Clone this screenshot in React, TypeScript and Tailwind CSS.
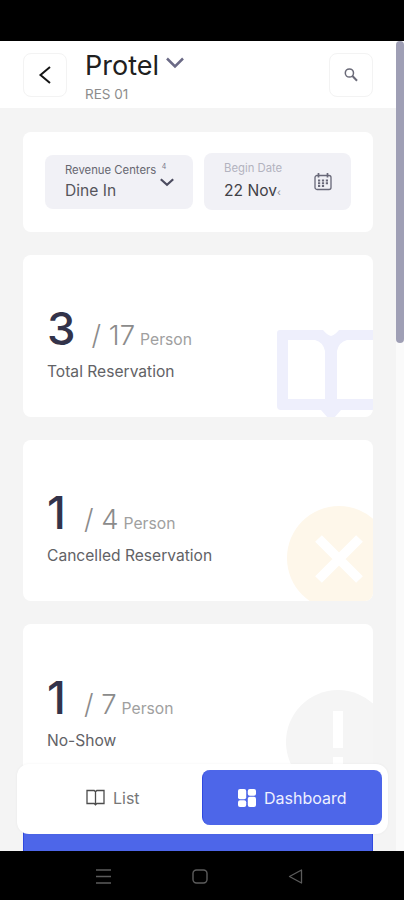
import type { ReactNode } from 'react';

const stats = [
  { id: 1, count: 3, people: '17', label: 'Total Reservation', gap: 'ml-[16px]', icon: <BookArt /> },
  { id: 2, count: 1, people: '4', label: 'Cancelled Reservation', gap: 'ml-[18px]', icon: <CancelArt /> },
  { id: 3, count: 1, people: '7', label: 'No-Show', gap: 'ml-[18px]', icon: <AlertArt /> },
];

function BookArt() {
  return (
    <svg className="absolute left-[254px] top-[75px]" width="108" height="90" viewBox="0 0 108 90" fill="none">
      <path
        d="M0 3Q0 0 3 0H46Q50 5 54 6Q58 5 62 0H104Q108 0 108 4V77Q108 80 104 80H64L57 88Q54 91 51 88L44 80H4Q0 80 0 76ZM11 10V69H48V21Q46 12 38 10ZM60 21V69H97V10H70Q62 12 60 21Z"
        fill="#eeeffc"
        fillRule="evenodd"
      />
    </svg>
  );
}

function CancelArt() {
  return (
    <svg className="absolute left-[264px] top-[66px]" width="104" height="104" viewBox="0 0 104 104" fill="none">
      <circle cx="52" cy="52" r="52" fill="#fef7ea" />
      <path d="M31.5 32.5L72.5 73.5M72.5 32.5L31.5 73.5" stroke="#fff" strokeWidth="9.5" />
    </svg>
  );
}

function AlertArt() {
  return (
    <svg className="absolute left-[263px] top-[66px]" width="104" height="104" viewBox="0 0 104 104" fill="none">
      <circle cx="52" cy="52" r="52" fill="#f5f5f5" />
      <path d="M47 21H57V58H47ZM47 67H57V78H47Z" fill="#fff" />
    </svg>
  );
}

function IconBox({ children }: { children: ReactNode }) {
  return (
    <button className="flex h-[44px] w-[44px] shrink-0 items-center justify-center rounded-lg border border-[#f3f3f3] bg-white">
      {children}
    </button>
  );
}

export default function App() {
  return (
    <div className="flex h-[900px] w-[404px] flex-col overflow-hidden bg-black font-['Inter',sans-serif]">
      {/* Status bar */}
      <div className="h-[41px] shrink-0 bg-black" />

      <div className="relative flex h-[810px] shrink-0 bg-[#f4f4f4]">
        <div className="flex w-[396px] flex-col overflow-hidden">
          {/* Header */}
          <header className="flex h-[67px] shrink-0 items-start bg-white pl-[23px] pt-[12px]">
            <IconBox>
              <svg width="14" height="20" viewBox="0 0 14 20" fill="none" stroke="#151515" strokeWidth="2">
                <path d="M12 2L2.5 10L12 18" />
              </svg>
            </IconBox>
            <div className="ml-[18px] w-[244px]">
              <div className="flex h-[26px] items-center">
                <h1 className="text-[27px] leading-[26px] text-[#202020]">Protel</h1>
                <svg className="ml-[7px] mt-[-6px]" width="18" height="12" viewBox="0 0 18 12" fill="none" stroke="#6b6a86" strokeWidth="2.5">
                  <path d="M1 1.5L9 9.5L17 1.5" />
                </svg>
              </div>
              <p className="mt-[5px] text-[13.5px] leading-[20px] text-[#8c8c8c]">RES 01</p>
            </div>
            <IconBox>
              <svg width="14" height="14" viewBox="0 0 14 14" fill="none" stroke="#6a6a78">
                <circle cx="5.4" cy="5" r="4.1" strokeWidth="1.5" />
                <path d="M8.5 8L13 12.8" strokeWidth="2" />
              </svg>
            </IconBox>
          </header>

          <main className="flex flex-col gap-[23px] pl-[23px] pt-[24px]">
            {/* Filters */}
            <section className="flex h-[100px] w-[350px] shrink-0 gap-[11px] rounded-lg bg-white pl-[22px] pt-[21px]">
              <div className="mt-[2px] flex h-[54px] w-[148px] rounded-lg bg-[#f1f1f6] pl-[20px] pt-[7px]">
                <div className="w-[92px] whitespace-nowrap">
                  <p className="text-[11.3px] leading-[16px] text-[#66666f]">Revenue Centers</p>
                  <p className="mt-[3px] text-[15.6px] leading-[20px] text-[#55555c]">Dine In</p>
                </div>
                <div className="flex w-[16px] flex-col items-center ml-[2px]">
                  <span className="mr-[6px] text-[7px] leading-[9px] text-[#77778a]">4</span>
                  <svg className="mt-[7px]" width="14" height="9" viewBox="0 0 14 9" fill="none" stroke="#4c4c60" strokeWidth="2.2">
                    <path d="M.8 1.2L7 6.8L13.2 1.2" />
                  </svg>
                </div>
              </div>
              <div className="flex h-[57px] w-[147px] rounded-lg bg-[#f1f1f6] pl-[20px] pt-[7px]">
                <div className="w-[60px] whitespace-nowrap">
                  <p className="text-[11.3px] leading-[16px] text-[#b3b3bf]">Begin Date</p>
                  <p className="mt-[5px] text-[15.6px] leading-[20px] text-[#414147]">
                    22 Nov<span className="text-[10px] text-[#8d8d95]">&lsaquo;</span>
                  </p>
                </div>
                <svg className="ml-[30px] mt-[13px]" width="18" height="18" viewBox="0 0 18 18" fill="none" stroke="#686878">
                  <rect x="1" y="2.5" width="16" height="14" rx="2" strokeWidth="1.3" />
                  <path d="M4.5 0V4.5M13.5 0V4.5" strokeWidth="1.7" />
                  <path d="M4 7.4H6.2M7.9 7.4H10.1M11.8 7.4H14M4 10.2H6.2M7.9 10.2H10.1M11.8 10.2H14M4 13H6.2M7.9 13H10.1" strokeWidth="2" />
                </svg>
              </div>
            </section>

            {/* Stat cards */}
            {stats.map((s) => (
              <section key={s.id} className="relative h-[161.5px] w-[350px] shrink-0 overflow-hidden rounded-lg bg-white pl-[24px] pt-[48.5px]">
                {s.icon}
                <div className="flex h-[50px] items-baseline whitespace-nowrap leading-[50px]">
                  <span className="text-[45.5px] font-medium text-[#33334a]">{s.count}</span>
                  <span className={`${s.gap} text-[27.5px] font-light text-[#8b8b8b]`}>/ {s.people}</span>
                  <span className="ml-[5px] text-[15.7px] text-[#a0a0a0]">Person</span>
                </div>
                <p className="mt-[8px] text-[15.6px] leading-[20px] text-[#626266]">{s.label}</p>
              </section>
            ))}
            <section className="h-[161px] w-[350px] shrink-0 border-x border-[#2f49e0] bg-[#4d66e9]" />
          </main>
        </div>

        {/* Scrollbar */}
        <div className="w-[8px] bg-[#fafafa]">
          <div className="h-[302px] rounded bg-[#9f9fb5]" />
        </div>

        {/* Bottom tabs */}
        <nav className="absolute left-[17px] top-[723px] flex h-[70px] w-[371px] rounded-xl bg-white pt-[6px] shadow-[0_0_3px_rgba(0,0,0,0.05)]">
          <button className="flex h-[55px] w-[185px] items-center pl-[69px] text-[16px] text-[#777]">
            <svg width="19" height="17" viewBox="0 0 19 17" fill="none" stroke="#4c4c4c" strokeWidth="1.3">
              <path d="M1 1.5H8.2L9.5 2.8L10.8 1.5H18V14.5H10.8L9.5 15.8L8.2 14.5H1ZM9.5 2.8V15.8" />
            </svg>
            <span className="ml-[8px]">List</span>
          </button>
          <button className="flex h-[55px] w-[180px] items-center rounded-lg border-l border-[#2f49e0] bg-[#4d66e9] pl-[34px] text-[16px] text-[#eef0ff]">
            <svg width="20" height="20" viewBox="0 0 20 20" fill="#fff">
              <rect x="1" y="1" width="8.2" height="10.2" rx="2" />
              <rect x="10.8" y="1" width="8.2" height="6.7" rx="2" />
              <rect x="1" y="12.3" width="8.2" height="6.7" rx="2" />
              <rect x="10.8" y="8.8" width="8.2" height="10.2" rx="2" />
            </svg>
            <span className="ml-[7px]">Dashboard</span>
          </button>
        </nav>
      </div>

      {/* System navigation */}
      <footer className="flex h-[49px] shrink-0 bg-black pl-[96px] pt-[18px]">
        <svg width="15" height="15" viewBox="0 0 15 15" fill="none" stroke="#5c5c5c" strokeWidth="1.3">
          <path d="M0 1H15M0 7.5H15M0 14H15" />
        </svg>
        <svg className="ml-[81px]" width="16" height="15" viewBox="0 0 16 15" fill="none" stroke="#5c5c5c" strokeWidth="1.4">
          <rect x="1" y="1" width="14" height="13" rx="3.5" />
        </svg>
        <svg className="ml-[80px]" width="16" height="15" viewBox="0 0 16 15" fill="none" stroke="#5c5c5c" strokeWidth="1.3" strokeLinejoin="round">
          <path d="M13.5 1V14L1.5 7.5Z" />
        </svg>
      </footer>
    </div>
  );
}
